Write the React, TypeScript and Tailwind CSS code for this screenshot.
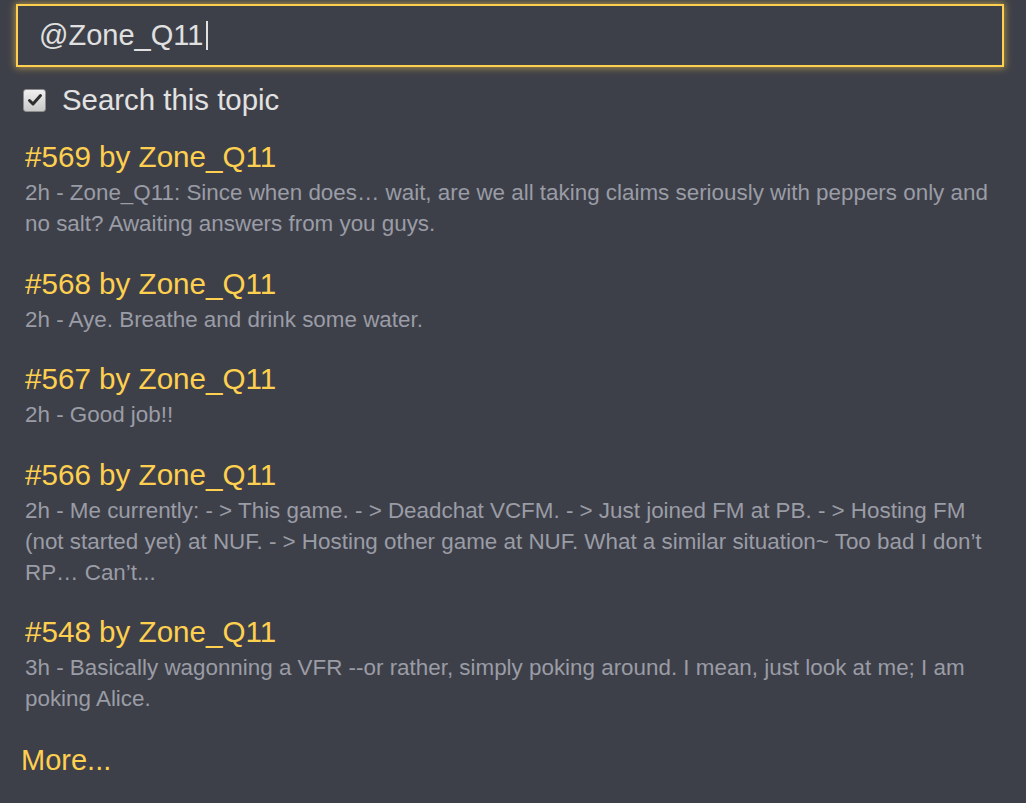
import { useState } from 'react'

type Post = {
  id: number
  author: string
  age: string
  text: string
}

const posts: Post[] = [
  {
    id: 569,
    author: 'Zone_Q11',
    age: '2h',
    text: 'Zone_Q11: Since when does… wait, are we all taking claims seriously with peppers only and no salt? Awaiting answers from you guys.',
  },
  { id: 568, author: 'Zone_Q11', age: '2h', text: 'Aye. Breathe and drink some water.' },
  { id: 567, author: 'Zone_Q11', age: '2h', text: 'Good job!!' },
  {
    id: 566,
    author: 'Zone_Q11',
    age: '2h',
    text: 'Me currently: - > This game. - > Deadchat VCFM. - > Just joined FM at PB. - > Hosting FM (not started yet) at NUF. - > Hosting other game at NUF. What a similar situation~ Too bad I don’t RP… Can’t...',
  },
  {
    id: 548,
    author: 'Zone_Q11',
    age: '3h',
    text: 'Basically wagonning a VFR --or rather, simply poking around. I mean, just look at me; I am poking Alice.',
  },
]

function Checkbox({ checked, onChange }: { checked: boolean; onChange: () => void }) {
  return (
    <button
      onClick={onChange}
      className="w-[23px] h-[23px] rounded-[3px] border border-[#8d8d8d] bg-gradient-to-b from-[#f0f0f0] to-[#c9c9c9] flex items-center justify-center shrink-0"
    >
      {checked && (
        <svg width="16" height="16" viewBox="0 0 16 16">
          <path d="M2.5 8.5 L6 12 L13.5 3.5" fill="none" stroke="#2e2e2e" strokeWidth="3" strokeLinecap="round" strokeLinejoin="round" />
        </svg>
      )}
    </button>
  )
}

export default function App() {
  const [topicOnly, setTopicOnly] = useState(true)

  return (
    <div className="min-h-[803px] bg-[#3e4049] pl-[16px] pr-[22px] pt-[4px] font-[family-name:Liberation_Sans,Arial,sans-serif]">
      {/* Search box */}
      <div className="h-[63px] border-2 border-[#ffd04f] shadow-[0_0_7px_1px_rgba(255,208,79,0.55)] flex items-center pl-[21px]">
        <span className="text-[29px] text-[#e0e0e0] leading-none">@Zone_Q11</span>
        <span className="w-[1.5px] h-[29px] bg-[#e0e0e0] ml-[3px]" />
      </div>

      <label className="mt-[13px] h-[40px] flex items-center gap-[16px] pl-[7px]">
        <Checkbox checked={topicOnly} onChange={() => setTopicOnly(!topicOnly)} />
        <span className="text-[29.4px] text-[#e2e2e2] leading-none">Search this topic</span>
      </label>

      {/* Results */}
      <div className="mt-[16px] pl-[9px] flex flex-col gap-[23.5px]">
        {posts.map((p) => (
          <div key={p.id}>
            <a className="block text-[29.6px] leading-[41px] text-[#ffd04f]">
              #{p.id} by {p.author}
            </a>
            <p className="text-[22.4px] leading-[31px] text-[#9a9ca6]">
              {p.age} - {p.text}
            </p>
          </div>
        ))}
      </div>

      <a className="block mt-[26px] pl-[5px] text-[29px] leading-[41px] text-[#ffd04f]">More...</a>
    </div>
  )
}
